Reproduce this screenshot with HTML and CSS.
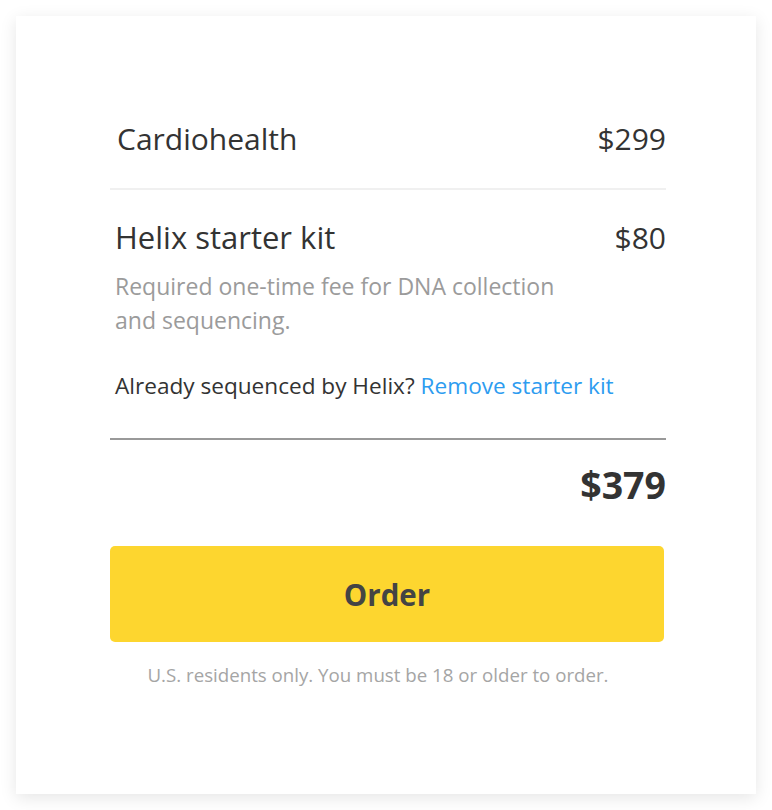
FILE: index.html
```html
<!DOCTYPE html>
<html>
<head>
<meta charset="utf-8">
<link rel="stylesheet" href="styles.css">
</head>
<body>
<div class="card">
  <div class="row first">
    <span class="name">Cardiohealth</span>
    <span class="price">$299</span>
  </div>
  <div class="item">
    <div class="row">
      <span class="name">Helix starter kit</span>
      <span class="price">$80</span>
    </div>
    <p class="desc">Required one-time fee for DNA collection<br>and sequencing.</p>
    <p class="already">Already sequenced by Helix? <a class="link" href="#">Remove starter kit</a></p>
  </div>
  <div class="total">$379</div>
  <button class="order">Order</button>
  <p class="note">U.S. residents only. You must be 18 or older to order.</p>
</div>
</body>
</html>
```
FILE: styles.css
```css
html, body {
  margin: 0;
  padding: 0;
  background: #ffffff;
}
body {
  padding: 16px;
  font-family: "Open Sans", "Noto Sans", sans-serif;
  color: #333333;
}
.card {
  width: 740px;
  height: 778px;
  box-sizing: border-box;
  padding: 102px 90px 0 94px;
  background: #fff;
  box-shadow: 0 4px 16px rgba(0,0,0,0.10);
}
.row {
  display: flex;
  justify-content: space-between;
  align-items: baseline;
  line-height: 42px;
}
.first {
  padding: 0 0 28px 7px;
  border-bottom: 2px solid #f0f0f0;
}
.name {
  font-size: 30px;
  color: #333;
}
.item .name {
  font-size: 31px;
}
.price {
  font-size: 30px;
  color: #333;
}
.item {
  padding: 26px 0 0 5px;
  border-bottom: 2px solid #999;
}
.desc {
  margin: 10px 0 0;
  font-size: 23px;
  line-height: 34px;
  color: #9b9b9b;
}
.already {
  margin: 33px 0 36px;
  font-size: 22.6px;
  line-height: 32px;
  color: #333;
}
.link {
  color: #2d9cf0;
  text-decoration: none;
}
.total {
  text-align: right;
  font-size: 37.5px;
  font-weight: 700;
  color: #333;
  margin-top: 20px;
  line-height: 50px;
}
.order {
  display: block;
  width: 554px;
  height: 96px;
  margin-top: 36px;
  border: none;
  border-radius: 5px;
  background: #fdd62f;
  font-family: inherit;
  font-size: 29.5px;
  font-weight: 700;
  color: #444;
}
.note {
  margin: 20px 0 0;
  padding-right: 20px;
  text-align: center;
  font-size: 18.7px;
  color: #a5a5a5;
}
```
